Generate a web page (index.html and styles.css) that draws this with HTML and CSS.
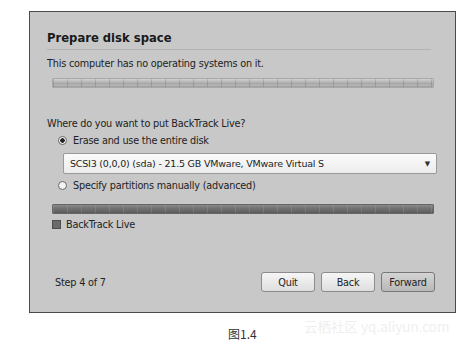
FILE: index.html
```html
<!DOCTYPE html>
<html lang="en">
<head>
  <meta charset="UTF-8">
  <title>Prepare disk space</title>
  <link rel="stylesheet" href="styles.css">
</head>
<body>
  <div class="shot">
    <div class="dialog">
      <h1>Prepare disk space</h1>
      <p class="intro">This computer has no operating systems on it.</p>
      <div class="bar bar-light"></div>

      <p class="question">Where do you want to put BackTrack Live?</p>
      <label class="option">
        <span class="radio checked"></span>
        Erase and use the entire disk
      </label>
      <div class="select">
        <span>SCSI3 (0,0,0) (sda) - 21.5 GB VMware, VMware Virtual S</span>
        <span class="arrow">&#9660;</span>
      </div>
      <label class="option">
        <span class="radio"></span>
        Specify partitions manually (advanced)
      </label>
      <div class="bar bar-dark"></div>
      <div class="legend">
        <span class="swatch"></span>
        BackTrack Live
      </div>

      <div class="footer">
        <span class="step">Step 4 of 7</span>
        <div class="buttons">
          <button>Quit</button>
          <button>Back</button>
          <button class="default">Forward</button>
        </div>
      </div>
    </div>
  </div>

  <div class="caption">
    <span class="fig">图1.4</span>
    <span class="mark">云栖社区 yq.aliyun.com</span>
  </div>
</body>
</html>
```

FILE: styles.css
```css
body {
  margin: 0;
  background: #ffffff;
  font-family: 'DejaVu Sans', sans-serif;
  color: #222;
}

.shot {
  padding: 11px 0 0 29px;
}

.dialog {
  width: 388px;
  height: 300px;
  border: 1px solid #4a4a4a;
  background: #c8c8c8;
  padding: 0 20px 0 17px;
  display: flex;
  flex-direction: column;
}

.dialog h1 {
  margin: 19px 0 0 0;
  padding-bottom: 4px;
  font-size: 11.6px;
  font-weight: bold;
  color: #1a1a1a;
  border-bottom: 1px solid #b2b2b2;
  width: 384px;
}

.intro {
  margin: 8px 0 0 0;
  font-size: 9.7px;
  letter-spacing: -0.2px;
}

.bar {
  height: 10px;
  width: 382px;
  margin-left: 5px;
  border-radius: 1px;
  box-sizing: border-box;
}

.bar-light {
  margin-top: 9px;
  background:
    repeating-linear-gradient(90deg, rgba(0,0,0,0.12) 0 1px, transparent 1px 14px),
    linear-gradient(#d2d2d2, #bcbcbc 30%, #a6a6a6 60%, #b8b8b8 85%, #909090);
  border: 1px solid #a8a8a8;
}

.bar-dark {
  margin-top: 13px;
  background:
    repeating-linear-gradient(90deg, rgba(255,255,255,0.1) 0 1px, transparent 1px 14px),
    linear-gradient(#8a8a8a, #727272 40%, #686868 70%, #5a5a5a);
  border: 1px solid #666;
}

.question {
  margin: 30px 0 0 0;
  font-size: 9.7px;
  letter-spacing: -0.2px;
}

.option {
  display: flex;
  align-items: center;
  gap: 6px;
  margin: 6px 0 0 11px;
  font-size: 9.7px;
  letter-spacing: -0.2px;
}

.radio {
  width: 7px;
  height: 7px;
  border: 1px solid #666;
  border-radius: 50%;
  background: #f4f4f4;
}

.radio.checked {
  background: radial-gradient(circle, #222 0 2px, #f4f4f4 2.5px);
}

.select {
  margin: 7px 0 0 16px;
  width: 374px;
  height: 21px;
  box-sizing: border-box;
  border: 1px solid #9a9a9a;
  border-radius: 2px;
  background: linear-gradient(#fbfbfb, #ececec);
  display: flex;
  align-items: center;
  justify-content: space-between;
  padding: 0 6px;
  font-size: 9.5px;
  letter-spacing: -0.2px;
}

.select .arrow {
  font-size: 7px;
  color: #333;
}

.legend {
  display: flex;
  align-items: center;
  gap: 5px;
  margin: 5px 0 0 5px;
  font-size: 9.7px;
  letter-spacing: -0.2px;
}

.swatch {
  width: 7px;
  height: 7px;
  background: #6a6a6a;
  border: 1px solid #4c4c4c;
}

.footer {
  margin-top: auto;
  margin-bottom: 20px;
  display: flex;
  align-items: center;
  justify-content: space-between;
  padding-left: 8px;
}

.step {
  font-size: 9.7px;
  letter-spacing: -0.2px;
}

.buttons {
  display: flex;
  gap: 6px;
}

.buttons button {
  width: 54px;
  height: 20px;
  font-family: 'DejaVu Sans', sans-serif;
  font-size: 9.7px;
  letter-spacing: -0.2px;
  color: #222;
  border: 1px solid #8c8c8c;
  border-radius: 3px;
  background: linear-gradient(#f6f6f6, #dedede);
  padding: 0;
}

.buttons button.default {
  background: linear-gradient(#d4d4d4, #b8b8b8);
  border-color: #777;
}

.caption {
  position: relative;
  height: 34px;
}

.fig {
  position: absolute;
  left: 228px;
  top: 12px;
  font-family: 'Noto Sans CJK SC', sans-serif;
  font-size: 12px;
  color: #333;
}

.mark {
  position: absolute;
  left: 304px;
  top: 3px;
  font-family: 'Noto Sans CJK SC', sans-serif;
  font-size: 13.5px;
  color: #efefef;
}
```
